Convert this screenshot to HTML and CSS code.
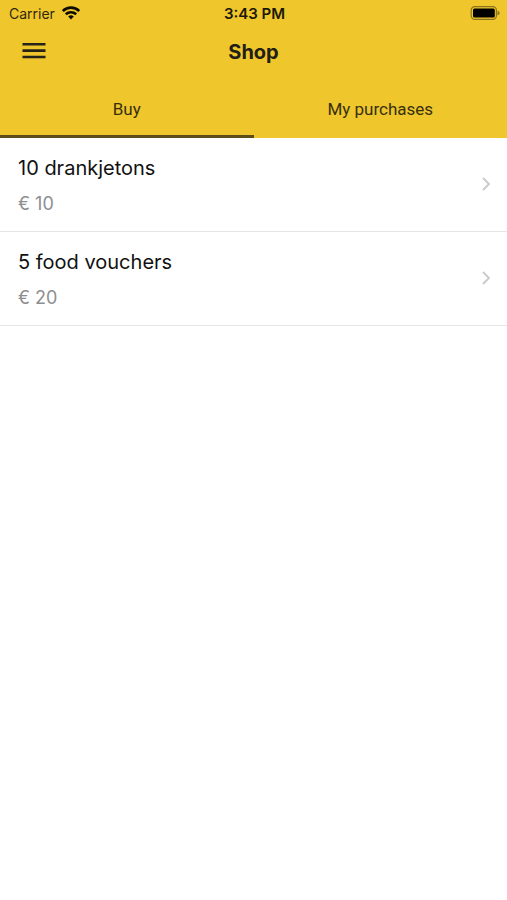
FILE: index.html
```html
<!DOCTYPE html>
<html lang="en">
<head>
<meta charset="utf-8">
<meta name="viewport" content="width=device-width, initial-scale=1">
<title>Shop</title>
<link rel="stylesheet" href="styles.css">
</head>
<body>
<header class="header">
  <div class="status">
    <div class="carrier">
      <span>Carrier</span>
      <svg class="wifi" viewBox="0 0 18 14" aria-hidden="true">
        <path d="M.8 5C5.200 .5 12.800 .5 17.200 5M3.800 8.200C6.700 5.500 11.300 5.500 14.200 8.200" fill="none" stroke="currentColor" stroke-width="2.600"/>
        <path d="M6.200 10.500Q9 8.200 11.800 10.500L9 13.400Z" fill="currentColor"/>
      </svg>
    </div>
    <span class="time">3:43 PM</span>
    <svg class="battery" viewBox="0 0 30 14" aria-hidden="true">
      <rect x="1.200" y=".6" width="25.200" height="12.800" rx="3.600" fill="none" stroke="#8a731c" stroke-width="1.200"/>
      <rect x="3" y="2.500" width="21.800" height="9" rx="1.500" fill="#000"/>
      <path d="M27.500 4.500Q29.700 5.500 29.700 7T27.500 9.500Z" fill="#8a731c"/>
    </svg>
  </div>
  <div class="navbar">
    <button class="menu" type="button" aria-label="Menu">
      <svg viewBox="0 0 24 18" aria-hidden="true"><path d="M.5 2.200H23.500M.5 8.600H23.500M.5 15H23.500" stroke="currentColor" stroke-width="2.600"/></svg>
    </button>
    <h1 class="title">Shop</h1>
  </div>
  <nav class="tabs">
    <a class="tab active" href="#buy" aria-current="page">Buy</a>
    <a class="tab" href="#purchases">My purchases</a>
  </nav>
</header>
<main class="list">
  <a class="item" href="#drankjetons">
    <span class="label"><span class="name">10 drankjetons</span><span class="price">€ 10</span></span>
    <svg class="chevron" viewBox="0 0 8 14" aria-hidden="true"><path d="M1 1L7 7L1 13" fill="none" stroke="currentColor" stroke-width="1.800"/></svg>
  </a>
  <a class="item" href="#vouchers">
    <span class="label"><span class="name">5 food vouchers</span><span class="price">€ 20</span></span>
    <svg class="chevron" viewBox="0 0 8 14" aria-hidden="true"><path d="M1 1L7 7L1 13" fill="none" stroke="currentColor" stroke-width="1.800"/></svg>
  </a>
</main>
</body>
</html>
```
FILE: styles.css
```css
* { box-sizing: border-box; }
body {
  margin: 0;
  background: #fff;
  color: #111;
  font-family: Inter, "Liberation Sans", sans-serif;
}
a { color: inherit; text-decoration: none; }
svg { display: block; }
.header { background: #efc62c; }
.status {
  display: grid;
  grid-template-columns: 1fr auto 1fr;
  align-items: center;
  height: 28px;
  padding: 0 7px 0 9px;
  font-size: 14px;
  line-height: 20px;
}
.carrier { display: flex; align-items: center; gap: 7px; color: #2f280c; }
.wifi { width: 18px; height: 14px; margin-bottom: 2px; color: #0d0b02; }
.time { font-size: 15px; font-weight: 600; color: #1c1805; }
.battery { width: 30px; height: 14px; margin-bottom: 2px; justify-self: end; }
.navbar {
  display: grid;
  grid-template-columns: 1fr auto 1fr;
  align-items: center;
  height: 48px;
  padding: 0 22px;
}
.menu {
  justify-self: start;
  margin-bottom: 2px;
  padding: 0;
  border: 0;
  background: none;
  color: #262318;
}
.menu svg { width: 24px; height: 18px; }
.title { margin: 0; font-size: 20px; line-height: 28px; font-weight: 700; color: #222016; }
.tabs { display: grid; grid-template-columns: 1fr 1fr; height: 62px; }
.tab {
  padding-top: 21px;
  border-bottom: 3px solid transparent;
  font-family: Roboto, "Liberation Sans", sans-serif;
  font-size: 17px;
  line-height: 24px;
  text-align: center;
  color: #37300f;
}
.tab.active { border-color: #5c4d1a; }
.item {
  display: flex;
  align-items: center;
  justify-content: space-between;
  padding: 15px 17px 14px 18px;
  border-bottom: 1px solid #e6e6e6;
}
.label { display: grid; gap: 8px; }
.name { font-size: 20px; line-height: 30px; }
.price { font-size: 18px; line-height: 26px; color: #8e8e90; }
.chevron { width: 8px; height: 14px; margin-bottom: 2px; color: #c9c9cb; }
```
